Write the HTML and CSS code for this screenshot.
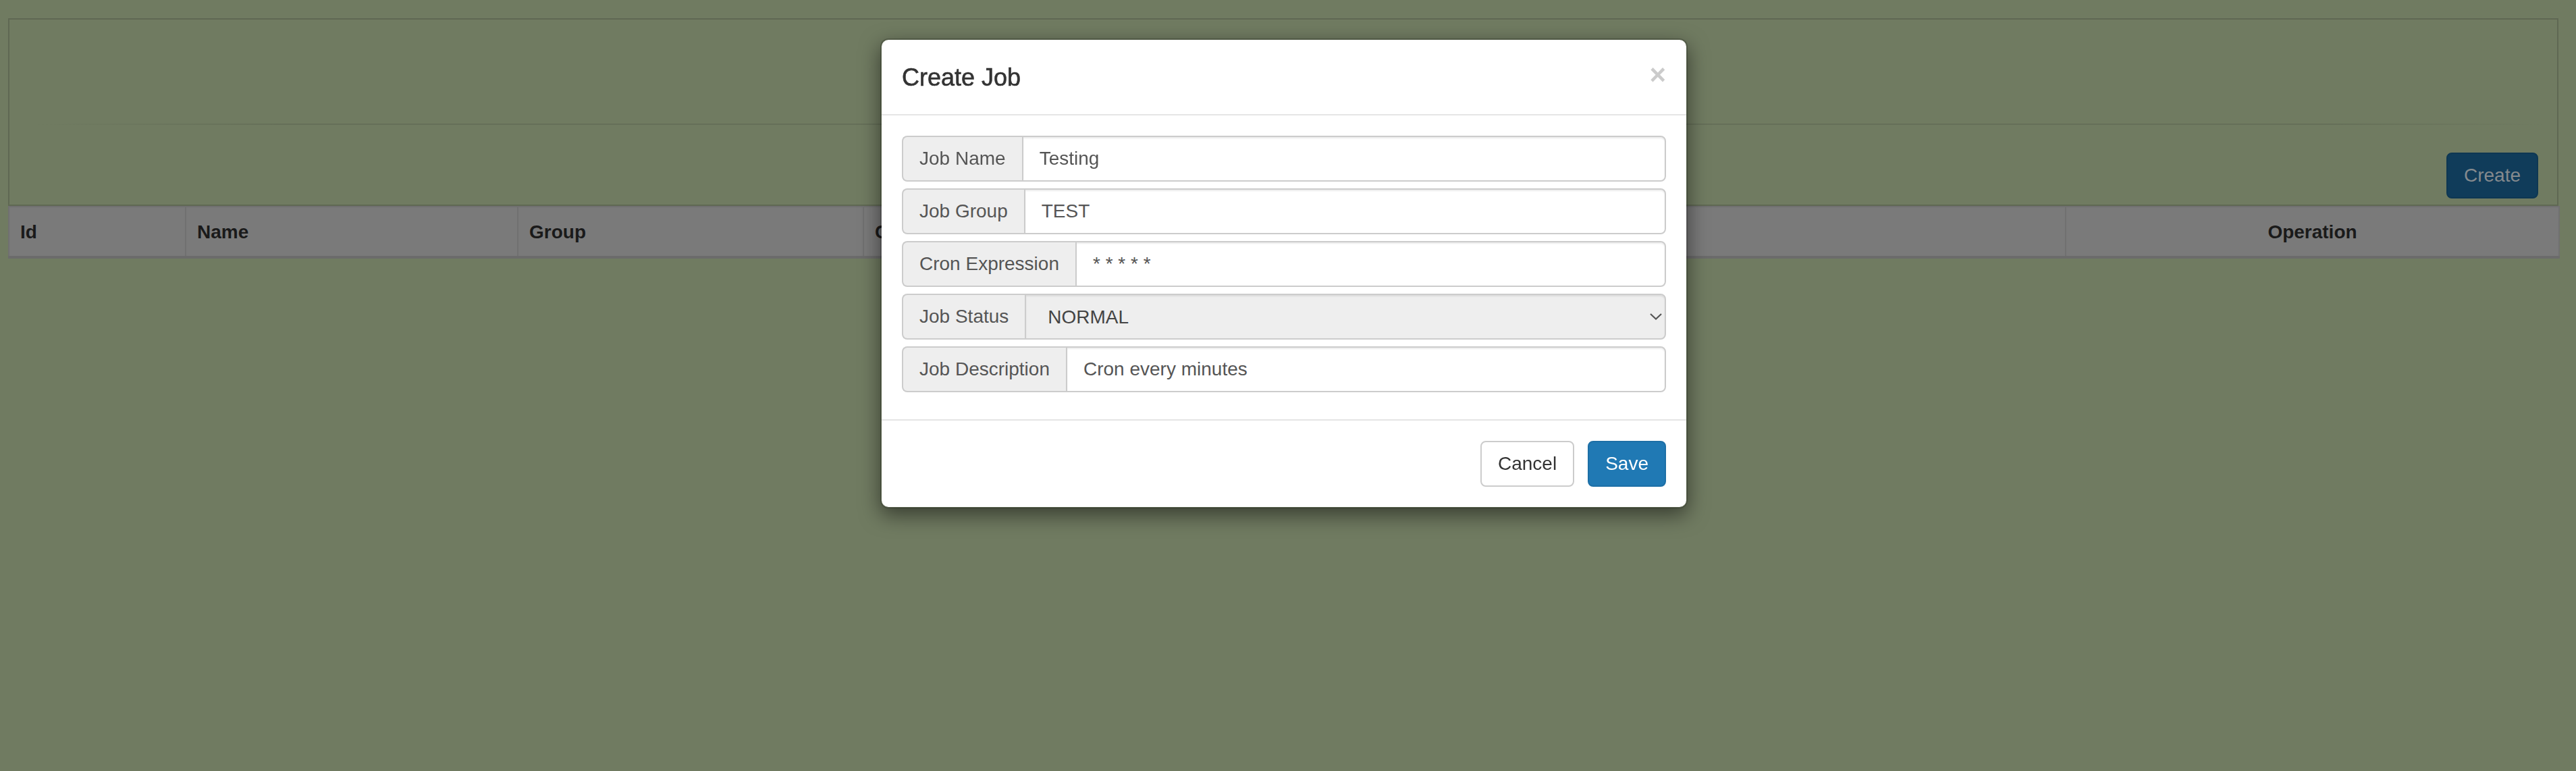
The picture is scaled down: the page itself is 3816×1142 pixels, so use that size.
FILE: index.html
```html
<!DOCTYPE html>
<html lang="en">
<head>
<meta charset="utf-8">
<title>Create Job</title>
<link rel="stylesheet" href="styles.css">
</head>
<body>
<div class="page">
  <div class="panel">
    <div class="panel-top"></div>
    <hr class="divider">
    <div class="panel-actions">
      <button class="btn btn-create" type="button">Create</button>
    </div>
  </div>
  <table class="jobs">
    <colgroup>
      <col class="c-id"><col class="c-name"><col class="c-group"><col class="c-cron"><col class="c-status"><col class="c-desc"><col class="c-op">
    </colgroup>
    <thead>
      <tr>
        <th>Id</th>
        <th>Name</th>
        <th>Group</th>
        <th>Cron Expression</th>
        <th>Status</th>
        <th>Description</th>
        <th class="th-center">Operation</th>
      </tr>
    </thead>
  </table>
</div>

<div class="modal">
  <div class="dialog">
    <div class="modal-header">
      <h4 class="modal-title">Create Job</h4>
      <button class="close" type="button">&times;</button>
    </div>
    <div class="modal-body">
      <div class="input-group">
        <span class="addon">Job Name</span>
        <input class="form-control" type="text" value="Testing">
      </div>
      <div class="input-group">
        <span class="addon">Job Group</span>
        <input class="form-control" type="text" value="TEST">
      </div>
      <div class="input-group">
        <span class="addon">Cron Expression</span>
        <input class="form-control" type="text" value="* * * * *">
      </div>
      <div class="input-group">
        <span class="addon">Job Status</span>
        <div class="select-wrap">
          <select class="form-control select">
            <option>NORMAL</option>
            <option>PAUSED</option>
          </select>
          <svg class="chevron" width="18" height="10" viewBox="0 0 18 10"><polyline points="1,1 9,8.5 17,1" fill="none" stroke="#555" stroke-width="2.2"/></svg>
        </div>
      </div>
      <div class="input-group">
        <span class="addon">Job Description</span>
        <input class="form-control" type="text" value="Cron every minutes">
      </div>
    </div>
    <div class="modal-footer">
      <button class="btn btn-default" type="button">Cancel</button>
      <button class="btn btn-primary" type="button">Save</button>
    </div>
  </div>
</div>
</body>
</html>
```

FILE: styles.css
```css
* { box-sizing: border-box; }

html, body { height: 100%; }

/* page is shown dimmed behind the open modal */
body {
  margin: 0;
  font-family: "Liberation Sans", Arial, sans-serif;
  font-size: 28px;
  line-height: 1.42857;
  color: #333;
  background: #707b61;
  overflow: hidden;
}

.page {
  padding: 27px 26px 0 12px;
}

.panel {
  border: 2px solid #5f6853;
  padding: 0 28px 9px;
}

.panel-top { height: 154px; }

.divider {
  height: 2px;
  border: 0;
  margin: 0 -28px 41px;
  background: linear-gradient(to right, rgba(101, 111, 88, 0) 1%, #656f58 11%, #656f58 91%, rgba(101, 111, 88, 0) 99.5%);
}

.panel-actions {
  display: flex;
  justify-content: flex-end;
}

.btn {
  font-family: inherit;
  font-size: 28px;
  line-height: 40px;
  padding: 12px 24px;
  border: 2px solid transparent;
  border-radius: 8px;
  cursor: pointer;
}

.btn-create {
  background: #103c5a;
  border-color: #0e3753;
  color: #858a8e;
}

.btn-primary {
  background: #2079b4;
  border-color: #1d6fa6;
  color: #fff;
}

.btn-default {
  background: #fff;
  border-color: #ccc;
  color: #333;
}

.jobs {
  width: 100%;
  border-collapse: collapse;
  table-layout: fixed;
  border: 2px solid #6e6e6e;
}

.c-id { width: 262px; }
.c-name { width: 492px; }
.c-group { width: 512px; }
.c-cron { width: 500px; }
.c-status { width: 500px; }
.c-desc { width: 781px; }
.c-op { width: 731px; }

.jobs th {
  background: #7a7a7a;
  padding: 17px 16px 15px;
  line-height: 40px;
  text-align: left;
  font-weight: bold;
  color: #1a1a1a;
  border: 2px solid #707070;
  border-bottom: 4px solid #6b6b6b;
  white-space: nowrap;
  overflow: hidden;
}

.jobs th.th-center { text-align: center; }

.modal {
  position: fixed;
  inset: 0;
  padding-right: 12px;
}

.dialog {
  width: 1196px;
  margin: 57px auto 0;
  background: #fff;
  background-clip: padding-box;
  border: 2px solid rgba(0, 0, 0, 0.2);
  border-radius: 12px;
  box-shadow: 0 10px 30px rgba(0, 0, 0, 0.5);
}

.modal-header {
  display: flex;
  justify-content: space-between;
  align-items: flex-start;
  padding: 31px 30px 29px;
  border-bottom: 2px solid #e5e5e5;
}

.modal-title {
  margin: 0;
  font-size: 36px;
  line-height: 50px;
  font-weight: 500;
  color: #333;
  -webkit-text-stroke: 0.6px #333;
}

.close {
  font-family: inherit;
  font-size: 42px;
  font-weight: bold;
  line-height: 1;
  color: #000;
  opacity: 0.2;
  background: none;
  border: 0;
  padding: 0;
  margin-top: 0;
  cursor: pointer;
}

.modal-body {
  display: flex;
  flex-direction: column;
  gap: 10px;
  padding: 30px 30px 40px;
}

.input-group {
  display: flex;
  height: 68px;
}

.addon {
  display: flex;
  align-items: center;
  padding: 0 24px;
  font-size: 28px;
  color: #555;
  background: #eee;
  border: 2px solid #ccc;
  border-right: 0;
  border-radius: 8px 0 0 8px;
  white-space: nowrap;
}

.form-control {
  flex: 1;
  min-width: 0;
  height: 100%;
  padding: 0 24px;
  font-family: inherit;
  font-size: 28px;
  color: #555;
  background: #fff;
  border: 2px solid #ccc;
  border-radius: 0 8px 8px 0;
  box-shadow: inset 0 2px 2px rgba(0, 0, 0, 0.075);
  outline: none;
}

.select-wrap {
  flex: 1;
  position: relative;
  display: flex;
}

.select {
  appearance: none;
  -webkit-appearance: none;
  width: 100%;
  padding-left: 32px;
  background: #eee;
  color: #444;
}

.chevron {
  position: absolute;
  right: 6px;
  top: 29px;
  pointer-events: none;
}

.modal-footer {
  display: flex;
  justify-content: flex-end;
  gap: 20px;
  padding: 30px;
  border-top: 2px solid #e5e5e5;
}
```
